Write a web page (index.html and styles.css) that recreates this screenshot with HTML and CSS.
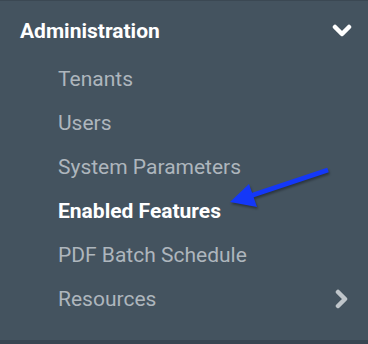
FILE: index.html
```html
<!DOCTYPE html>
<html lang="en">
	<head>
	<meta charset="UTF-8" />
	<meta name="viewport" content="width=device-width, initial-scale=1.0" />
	<title>Administration menu</title>
	<link rel="stylesheet" href="styles.css">
	</head>
	<body>
		<nav class="sidebar">
			<div class="group-head">
				<span>Administration</span>
				<svg class="chev" width="20" height="16" viewBox="0 0 20 16"><polyline points="3,4 10,11 17,4" /></svg>
			</div>
			<ul class="sub">
				<li>Tenants</li>
				<li>Users</li>
				<li>System Parameters</li>
				<li class="active">Enabled Features</li>
				<li>PDF Batch Schedule</li>
				<li class="has-sub">Resources
					<svg class="chev dim" width="16" height="20" viewBox="0 0 16 20"><polyline points="4,3 11,10 4,17" /></svg>
				</li>
			</ul>
			<svg class="callout" width="110" height="50" viewBox="0 0 110 50">
				<line x1="103" y1="5" x2="25" y2="31" />
				<polygon points="5,37 24,19 32,42" />
			</svg>
		</nav>
		<div class="bottom-bar"></div>
	</body>
</html>
```
FILE: styles.css
```css
* { box-sizing: border-box; }
html { font-family: Roboto, "Liberation Sans", sans-serif; font-size: 21px; }
body { margin: 0; background-color: #44535f; }
.sidebar { position: relative; height: 340px; border-top: 1px solid #3b4853; padding-top: 8px; }
.group-head { display: flex; justify-content: space-between; align-items: center; height: 44px; line-height: 44px; padding: 0 16px 0 20px; margin-bottom: 4px; color: #ffffff; font-weight: bold; }
.sub { list-style: none; margin: 0; padding: 0; }
.sub li { display: flex; justify-content: space-between; align-items: center; height: 44px; line-height: 44px; padding: 0 18px 0 58px; color: #aeb6bd; }
.sub li.active { color: #ffffff; font-weight: bold; }
.chev polyline { fill: none; stroke: #ffffff; stroke-width: 4.5; stroke-linecap: round; stroke-linejoin: round; }
.chev.dim polyline { stroke: #bfc5ca; }
.callout { position: absolute; left: 225px; top: 164px; filter: drop-shadow(1px 2px 1px rgba(0, 0, 0, 0.35)); }
.callout line { stroke: #1438f8; stroke-width: 5; }
.callout polygon { fill: #1438f8; }
.bottom-bar { height: 4px; background-color: #394652; }
```
